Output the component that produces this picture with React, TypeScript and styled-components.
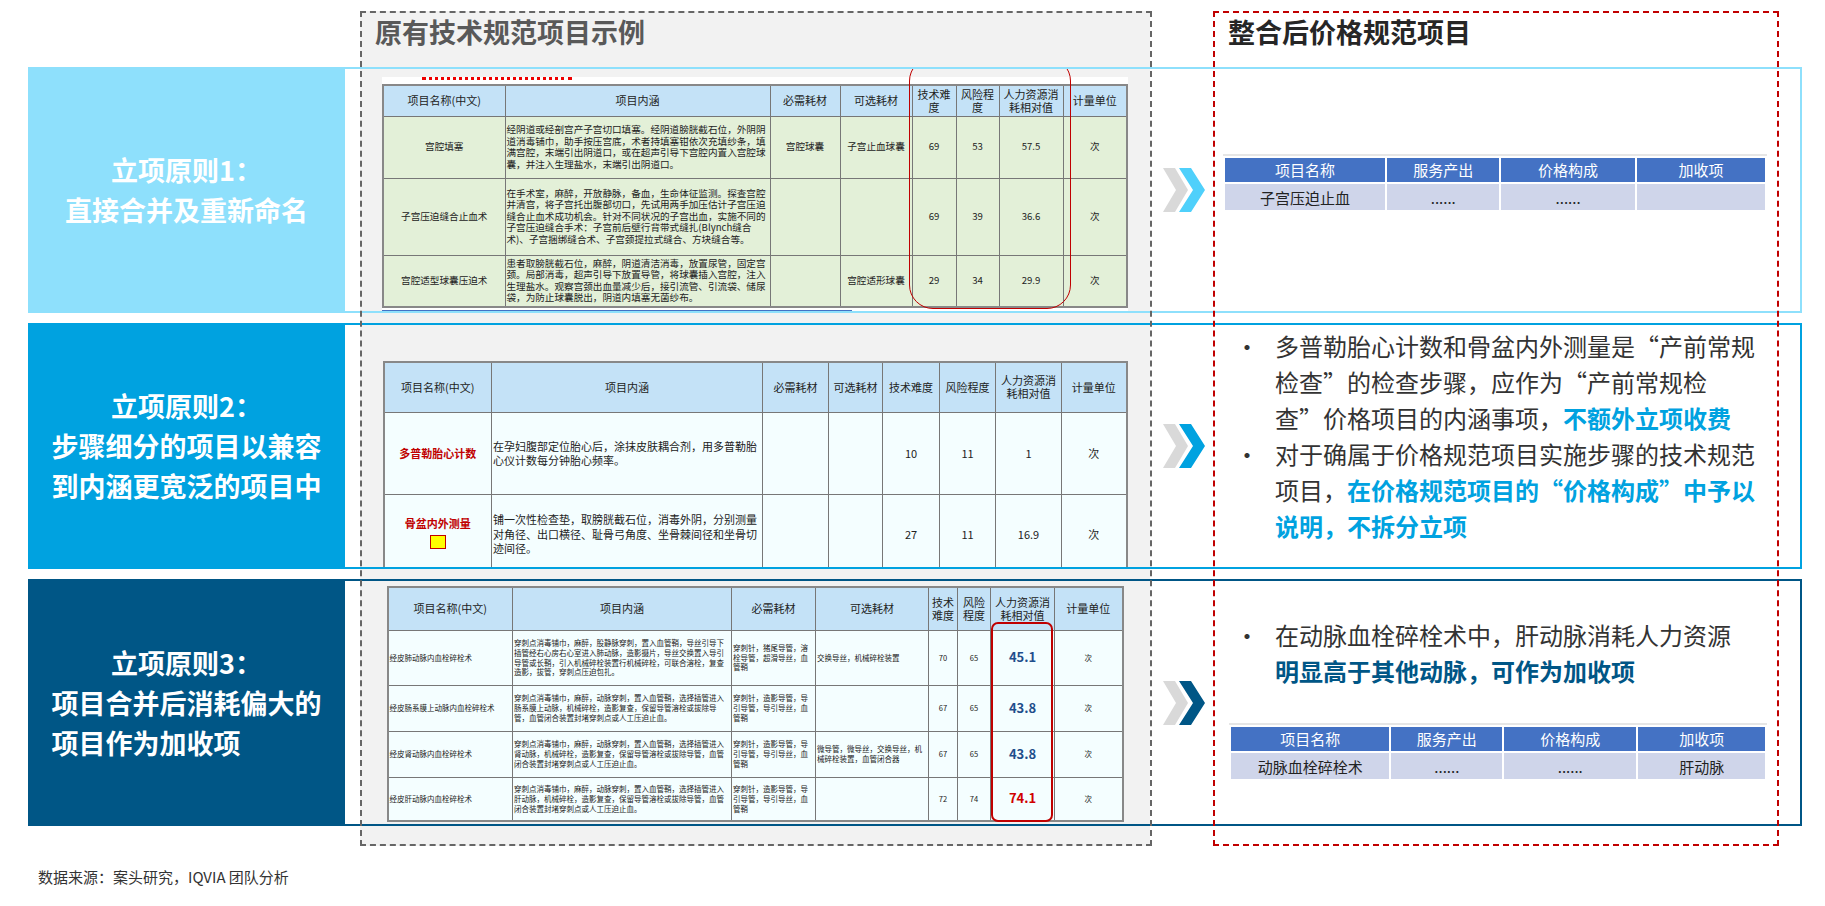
import React from 'react';
import styled, { createGlobalStyle } from 'styled-components';

const GlobalStyle = createGlobalStyle`
	html, body { margin: 0; padding: 0; background: #fff; }
	body { font-family: "Noto Sans CJK SC", "Noto Sans", sans-serif; }
`;

const C1 = '#8ee0fc';
const C2 = '#00a2e0';
const C3 = '#005686';

const Page = styled.div`
	position: relative;
	width: 1825px;
	height: 906px;
	overflow: hidden;
	padding: 0 23px 0 28px;
	box-sizing: border-box;
`;

const GreyBack = styled.div`
	position: absolute;
	left: 360px;
	top: 11px;
	width: 790px;
	height: 835px;
	background: #f2f2f2;
	z-index: 0;
`;

const Frame = styled.div<{ $color: string; $left: number; $width: number }>`
	position: absolute;
	left: ${(p) => p.$left}px;
	top: 11px;
	width: ${(p) => p.$width}px;
	height: 835px;
	border: 2px dashed ${(p) => p.$color};
	box-sizing: border-box;
	pointer-events: none;
	z-index: 3;
`;

const Header = styled.div`
	position: relative;
	z-index: 1;
	height: 67px;
	display: grid;
	grid-template-columns: 347px 853px 1fr;
	align-items: center;
	font-size: 27px;
	font-weight: 700;
	line-height: 1;
	padding-bottom: 4px;
	box-sizing: border-box;
`;

const Title = styled.div<{ $color: string }>`
	color: ${(p) => p.$color};
`;

const Rows = styled.div`
	position: relative;
	z-index: 1;
	display: flex;
	flex-direction: column;
	gap: 10px;
`;

const Row = styled.div<{ $h: number }>`
	display: flex;
	height: ${(p) => p.$h}px;
`;

const Label = styled.div<{ $bg: string }>`
	width: 317px;
	flex: none;
	background: ${(p) => p.$bg};
	color: #fff;
	font-weight: 700;
	font-size: 27px;
	line-height: 40px;
	display: flex;
	flex-direction: column;
	align-items: center;
	justify-content: center;
`;

const LabelBody = styled.div`
	text-align: left;
`;

const Outline = styled.div<{ $color: string }>`
	flex: 1;
	border: 2px solid ${(p) => p.$color};
	border-left: none;
	display: grid;
	grid-template-columns: 15px 790px 63px 566px 1fr;
	overflow: hidden;
`;

const TableZone = styled.div<{ $top: number }>`
	grid-column: 2;
	display: flex;
	justify-content: center;
	align-items: flex-start;
	padding-top: ${(p) => p.$top}px;
	overflow: hidden;
	position: relative;
`;

const ArrowZone = styled.div`
	grid-column: 3;
	display: flex;
	align-items: center;
	justify-content: center;
	padding-left: 6px;
`;

const RightZone = styled.div<{ $justify?: string }>`
	grid-column: 4;
	background: #fff;
	display: flex;
	flex-direction: column;
	justify-content: ${(p) => p.$justify || 'center'};
	padding: 0 6px 0 10px;
	box-sizing: border-box;
`;

const TableWrap = styled.div<{ $bg: string }>`
	position: relative;
	background: ${(p) => p.$bg};
`;

const OldTable = styled.table<{ $font: number }>`
	border-collapse: collapse;
	table-layout: fixed;
	font-size: ${(p) => p.$font}px;
	line-height: 1.3;
	color: #222;
	border: 2px solid #888;
`;

const Th = styled.th`
	background: #c4e2f7;
	font-weight: 400;
	border: 1px solid #777;
	font-size: 11px;
	line-height: 1.2;
	padding: 0 1px;
`;

const Td = styled.td<{ $align?: string; $red?: boolean; $num?: string }>`
	border: 1px solid #777;
	text-align: ${(p) => p.$align || 'center'};
	padding: 0 1px;
	color: ${(p) => (p.$num ? p.$num : p.$red ? '#c00000' : '#222')};
	font-weight: ${(p) => (p.$red || p.$num ? 700 : 400)};
	font-size: ${(p) => (p.$num ? '13px' : 'inherit')};
	vertical-align: middle;
`;

const RedRing = styled.div<{ $l: number; $t: number; $w: number; $h: number; $r: number; $bw: number }>`
	position: absolute;
	left: ${(p) => p.$l}px;
	top: ${(p) => p.$t}px;
	width: ${(p) => p.$w}px;
	height: ${(p) => p.$h}px;
	border: ${(p) => p.$bw}px solid #c00000;
	border-radius: ${(p) => p.$r}px;
	pointer-events: none;
`;

const BlueStrip = styled.div`
	height: 3px;
	width: 470px;
	background: #4472c4;
	margin-top: 2px;
`;

const RedTop = styled.div`
	height: 4px;
	width: 150px;
	margin-left: 40px;
	border-top: 3px dotted #e00;
`;

const YellowBox = styled.span`
	display: inline-block;
	width: 14px;
	height: 12px;
	background: #ffff00;
	border: 1px solid #c00000;
	margin-top: 4px;
`;

const NewTable = styled.table`
	border-collapse: separate;
	border-spacing: 2px;
	width: 100%;
	table-layout: fixed;
	font-size: 15px;
	border-top: 2px solid #e6e6e6;
`;

const NTh = styled.th`
	background: #4472c4;
	color: #fff;
	font-weight: 400;
	height: 24px;
	padding: 0;
	line-height: 24px;
`;

const NTd = styled.td`
	background: #cfd5ea;
	color: #222;
	text-align: center;
	height: 26px;
	padding: 0;
`;

const Bullets = styled.ul`
	margin: 0;
	padding: 0;
	list-style: none;
	font-size: 24px;
	line-height: 36px;
	color: #333;
`;

const Bullet = styled.li`
	position: relative;
	padding-left: 52px;
	&::before {
		content: '•';
		position: absolute;
		left: 12px;
		top: 0;
	}
`;

const Em = styled.b<{ $color: string }>`
	color: ${(p) => p.$color};
`;

const Footer = styled.div`
	position: relative;
	z-index: 1;
	margin-top: 40px;
	padding-left: 10px;
	font-size: 15px;
	color: #333;
`;

const Chevron = ({ color }: { color: string }) => (
	<svg width="44" height="44" viewBox="0 0 44 44">
		<polygon points="0,0 12,0 25,22 12,44 0,44 13,22" fill="#d9d9d9" />
		<polygon points="16,0 28,0 42,22 28,44 16,44 30,22" fill={color} />
	</svg>
);

const t1Cols = [122, 265, 70, 72, 44, 43, 64, 64];
const t2Cols = [108, 271, 66, 54, 57, 56, 66, 65];
const t3Cols = [125, 219, 84, 113, 29, 33, 64, 68];

const Cols = ({ w }: { w: number[] }) => (
	<colgroup>
		{w.map((x, i) => (
			<col key={i} style={{ width: x }} />
		))}
	</colgroup>
);

const Table1 = () => (
	<TableWrap $bg="#fff">
		<RedTop />
		<OldTable $font={9.6} style={{ width: 744, lineHeight: 1.2 }}>
			<Cols w={t1Cols} />
			<thead>
				<tr style={{ height: 31 }}>
					<Th>项目名称(中文)</Th>
					<Th>项目内涵</Th>
					<Th>必需耗材</Th>
					<Th>可选耗材</Th>
					<Th>技术难度</Th>
					<Th>风险程度</Th>
					<Th>人力资源消耗相对值</Th>
					<Th>计量单位</Th>
				</tr>
			</thead>
			<tbody style={{ background: '#e3f0d8' }}>
				<tr style={{ height: 62 }}>
					<Td>宫腔填塞</Td>
					<Td $align="left">经阴道或经剖宫产子宫切口填塞。经阴道膀胱截石位，外阴阴道消毒铺巾，助手按压宫底，术者持填塞钳依次充填纱条，填满宫腔，末端引出阴道口，或在超声引导下宫腔内置入宫腔球囊，并注入生理盐水，末端引出阴道口。</Td>
					<Td>宫腔球囊</Td>
					<Td>子宫止血球囊</Td>
					<Td>69</Td>
					<Td>53</Td>
					<Td>57.5</Td>
					<Td>次</Td>
				</tr>
				<tr style={{ height: 77 }}>
					<Td>子宫压迫缝合止血术</Td>
					<Td $align="left">在手术室，麻醉，开放静脉，备血，生命体征监测。探查宫腔并清宫，将子宫托出腹部切口，先试用两手加压估计子宫压迫缝合止血术成功机会。针对不同状况的子宫出血，实施不同的子宫压迫缝合手术：子宫前后壁行背带式缝扎(Blynch缝合术)、子宫捆绑缝合术、子宫颈提拉式缝合、方块缝合等。</Td>
					<Td></Td>
					<Td></Td>
					<Td>69</Td>
					<Td>39</Td>
					<Td>36.6</Td>
					<Td>次</Td>
				</tr>
				<tr style={{ height: 52 }}>
					<Td>宫腔适型球囊压迫术</Td>
					<Td $align="left">患者取膀胱截石位，麻醉，阴道清洁消毒，放置尿管，固定宫颈。局部消毒，超声引导下放置导管，将球囊插入宫腔，注入生理盐水。观察宫颈出血量减少后，接引流管、引流袋、储尿袋，为防止球囊脱出，阴道内填塞无菌纱布。</Td>
					<Td></Td>
					<Td>宫腔适形球囊</Td>
					<Td>29</Td>
					<Td>34</Td>
					<Td>29.9</Td>
					<Td>次</Td>
				</tr>
			</tbody>
		</OldTable>
		<BlueStrip />
		<RedRing $l={527} $t={-20} $w={160} $h={250} $r={24} $bw={1} />
	</TableWrap>
);

const Table2 = () => (
	<TableWrap $bg="#fff">
		<OldTable $font={11} style={{ width: 743 }}>
			<Cols w={t2Cols} />
			<thead>
				<tr style={{ height: 50 }}>
					<Th>项目名称(中文)</Th>
					<Th>项目内涵</Th>
					<Th>必需耗材</Th>
					<Th>可选耗材</Th>
					<Th>技术难度</Th>
					<Th>风险程度</Th>
					<Th>人力资源消耗相对值</Th>
					<Th>计量单位</Th>
				</tr>
			</thead>
			<tbody style={{ background: '#f4feff' }}>
				<tr style={{ height: 82 }}>
					<Td $red>多普勒胎心计数</Td>
					<Td $align="left">在孕妇腹部定位胎心后，涂抹皮肤耦合剂，用多普勒胎心仪计数每分钟胎心频率。</Td>
					<Td></Td>
					<Td></Td>
					<Td>10</Td>
					<Td>11</Td>
					<Td>1</Td>
					<Td>次</Td>
				</tr>
				<tr style={{ height: 80 }}>
					<Td $red>
						骨盆内外测量
						<br />
						<YellowBox />
					</Td>
					<Td $align="left">铺一次性检查垫，取膀胱截石位，消毒外阴，分别测量对角径、出口横径、耻骨弓角度、坐骨棘间径和坐骨切迹间径。</Td>
					<Td></Td>
					<Td></Td>
					<Td>27</Td>
					<Td>11</Td>
					<Td>16.9</Td>
					<Td>次</Td>
				</tr>
			</tbody>
		</OldTable>
	</TableWrap>
);

const t3Rows = [
	['经皮肺动脉内血栓碎栓术', '穿刺点消毒铺巾，麻醉，股静脉穿刺，置入血管鞘，导丝引导下插管经右心房右心室进入肺动脉，造影摄片，导丝交换置入导引导管或长鞘，引入机械碎栓装置行机械碎栓，可联合溶栓，复查造影，拔管，穿刺点压迫包扎。', '穿刺针，猪尾导管，溶栓导管，超滑导丝，血管鞘', '交换导丝，机械碎栓装置', '70', '65', '45.1', 55],
	['经皮肠系膜上动脉内血栓碎栓术', '穿刺点消毒铺巾，麻醉，动脉穿刺，置入血管鞘，选择插管进入肠系膜上动脉，机械碎栓，造影复查，保留导管溶栓或拔除导管，血管闭合装置封堵穿刺点或人工压迫止血。', '穿刺针，造影导管，导引导管，导引导丝，血管鞘', '', '67', '65', '43.8', 46],
	['经皮肾动脉内血栓碎栓术', '穿刺点消毒铺巾，麻醉，动脉穿刺，置入血管鞘，选择插管进入肾动脉，机械碎栓，造影复查，保留导管溶栓或拔除导管，血管闭合装置封堵穿刺点或人工压迫止血。', '穿刺针，造影导管，导引导管，导引导丝，血管鞘', '微导管，微导丝，交换导丝，机械碎栓装置，血管闭合器', '67', '65', '43.8', 46],
	['经皮肝动脉内血栓碎栓术', '穿刺点消毒铺巾，麻醉，动脉穿刺，置入血管鞘，选择插管进入肝动脉，机械碎栓，造影复查，保留导管溶栓或拔除导管，血管闭合装置封堵穿刺点或人工压迫止血。', '穿刺针，造影导管，导引导管，导引导丝，血管鞘', '', '72', '74', '74.1', 44],
] as const;

const Table3 = () => (
	<TableWrap $bg="#fff">
		<OldTable $font={7.5} style={{ width: 735 }}>
			<Cols w={t3Cols} />
			<thead>
				<tr style={{ height: 43 }}>
					<Th>项目名称(中文)</Th>
					<Th>项目内涵</Th>
					<Th>必需耗材</Th>
					<Th>可选耗材</Th>
					<Th>技术难度</Th>
					<Th>风险程度</Th>
					<Th>人力资源消耗相对值</Th>
					<Th>计量单位</Th>
				</tr>
			</thead>
			<tbody style={{ background: '#f4feff' }}>
				{t3Rows.map((r, i) => (
					<tr key={i} style={{ height: r[7] }}>
						<Td $align="left">{r[0]}</Td>
						<Td $align="left">{r[1]}</Td>
						<Td $align="left">{r[2]}</Td>
						<Td $align="left">{r[3]}</Td>
						<Td>{r[4]}</Td>
						<Td>{r[5]}</Td>
						<Td $num={i === 3 ? '#d00000' : '#1f4e8c'}>{r[6]}</Td>
						<Td>次</Td>
					</tr>
				))}
			</tbody>
		</OldTable>
		<RedRing $l={604} $t={36} $w={58} $h={196} $r={7} $bw={2} />
	</TableWrap>
);

const NewItem = ({ name, extra }: { name: string; extra: string }) => (
	<NewTable>
		<colgroup>
			<col style={{ width: '30%' }} />
			<col style={{ width: '21%' }} />
			<col style={{ width: '25%' }} />
			<col style={{ width: '24%' }} />
		</colgroup>
		<thead>
			<tr>
				<NTh>项目名称</NTh>
				<NTh>服务产出</NTh>
				<NTh>价格构成</NTh>
				<NTh>加收项</NTh>
			</tr>
		</thead>
		<tbody>
			<tr>
				<NTd>{name}</NTd>
				<NTd>......</NTd>
				<NTd>......</NTd>
				<NTd>{extra}</NTd>
			</tr>
		</tbody>
	</NewTable>
);

export default function App() {
	return (
		<Page>
			<GlobalStyle />
			<GreyBack />
			<Frame $color="#666" $left={360} $width={792} />
			<Frame $color="#c00000" $left={1213} $width={566} />
			<Header>
				<span />
				<Title $color="#595959">原有技术规范项目示例</Title>
				<Title $color="#262626">整合后价格规范项目</Title>
			</Header>
			<Rows>
				<Row $h={246}>
					<Label $bg={C1}>
						<div>立项原则1：</div>
						<LabelBody>直接合并及重新命名</LabelBody>
					</Label>
					<Outline $color={C1}>
						<TableZone $top={8}>
							<Table1 />
						</TableZone>
						<ArrowZone>
							<Chevron color="#4fd0fb" />
						</ArrowZone>
						<RightZone>
							<div style={{ marginTop: -14, padding: '0 6px 0 0' }}>
								<NewItem name="子宫压迫止血" extra="" />
							</div>
						</RightZone>
					</Outline>
				</Row>
				<Row $h={246}>
					<Label $bg={C2}>
						<div>立项原则2：</div>
						<LabelBody>
							步骤细分的项目以兼容
							<br />
							到内涵更宽泛的项目中
						</LabelBody>
					</Label>
					<Outline $color={C2}>
						<TableZone $top={36}>
							<Table2 />
						</TableZone>
						<ArrowZone>
							<Chevron color={C2} />
						</ArrowZone>
						<RightZone>
							<Bullets style={{ marginTop: -20 }}>
								<Bullet>
									多普勒胎心计数和骨盆内外测量是“产前常规检查”的检查步骤，应作为“产前常规检查”价格项目的内涵事项，<Em $color={C2}>不额外立项收费</Em>
								</Bullet>
								<Bullet>
									对于确属于价格规范项目实施步骤的技术规范项目，<Em $color={C2}>在价格规范项目的“价格构成”中予以说明，不拆分立项</Em>
								</Bullet>
							</Bullets>
						</RightZone>
					</Outline>
				</Row>
				<Row $h={247}>
					<Label $bg={C3}>
						<div>立项原则3：</div>
						<LabelBody>
							项目合并后消耗偏大的
							<br />
							项目作为加收项
						</LabelBody>
					</Label>
					<Outline $color={C3}>
						<TableZone $top={5}>
							<Table3 />
						</TableZone>
						<ArrowZone>
							<Chevron color={C3} />
						</ArrowZone>
						<RightZone $justify="flex-start">
							<Bullets style={{ marginTop: 36 }}>
								<Bullet>
									在动脉血栓碎栓术中，肝动脉消耗人力资源
									<br />
									<Em $color={C3}>明显高于其他动脉，可作为加收项</Em>
								</Bullet>
							</Bullets>
							<div style={{ marginTop: 34, padding: '0 6px 0 6px' }}>
								<NewItem name="动脉血栓碎栓术" extra="肝动脉" />
							</div>
						</RightZone>
					</Outline>
				</Row>
			</Rows>
			<Footer>数据来源：案头研究，IQVIA 团队分析</Footer>
		</Page>
	);
}
